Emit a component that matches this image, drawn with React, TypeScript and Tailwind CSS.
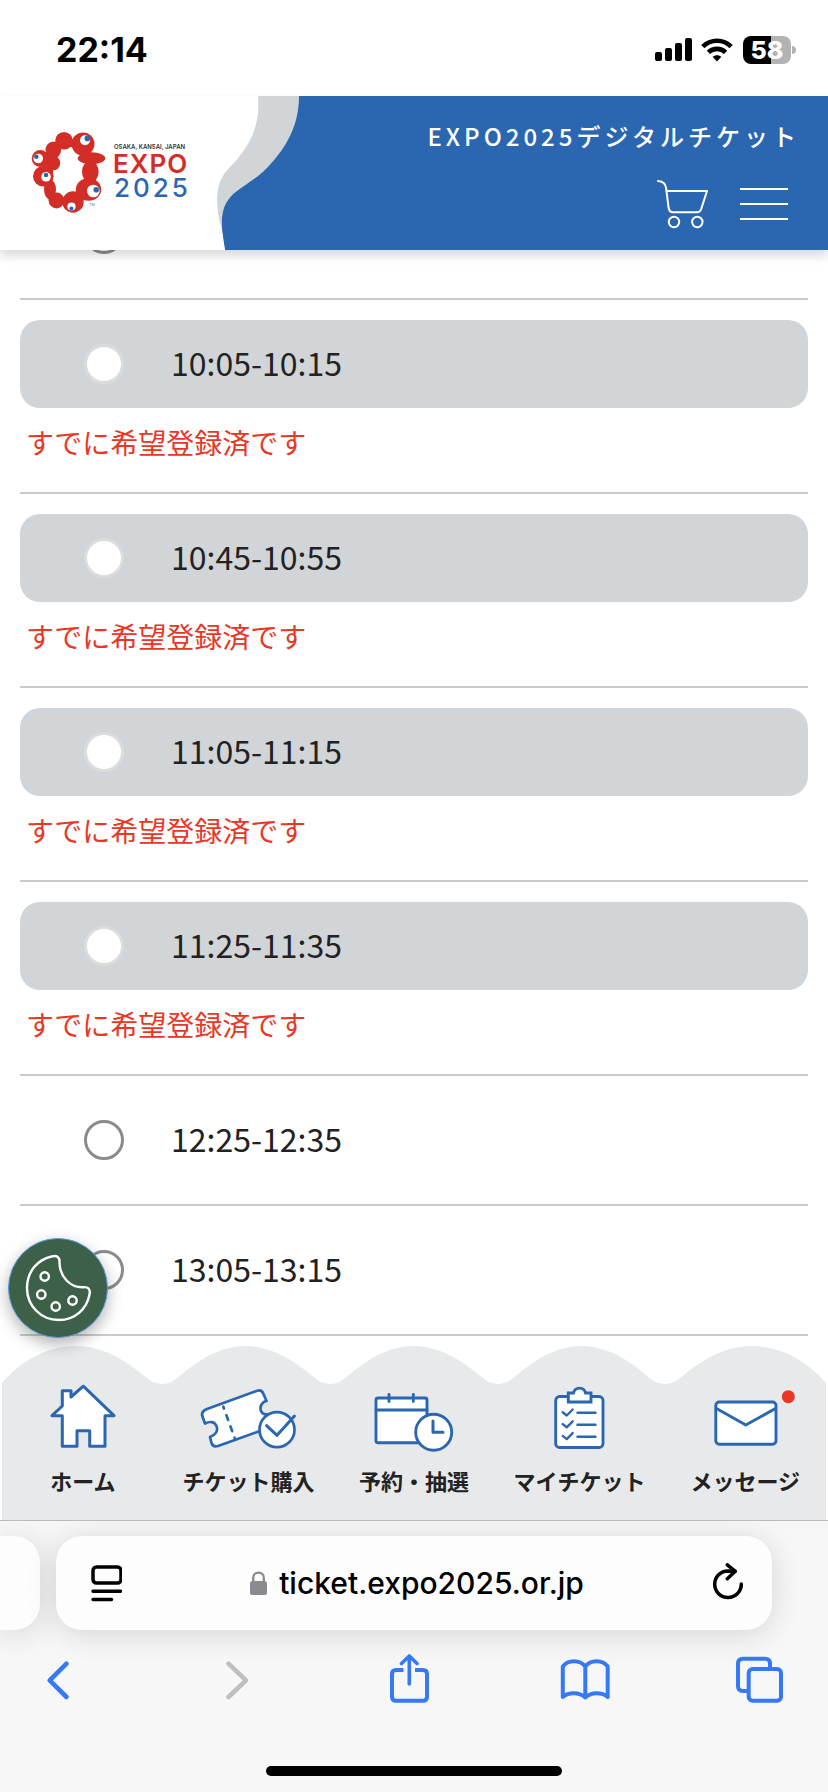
import React from 'react'

const slots = [
  { time: '10:05-10:15', taken: true },
  { time: '10:45-10:55', taken: true },
  { time: '11:05-11:15', taken: true },
  { time: '11:25-11:35', taken: true },
  { time: '12:25-12:35', taken: false },
  { time: '13:05-13:15', taken: false },
]

const iconStroke = {
  fill: '#fff',
  stroke: '#2b66b0',
  strokeWidth: 3,
  strokeLinejoin: 'round' as const,
  strokeLinecap: 'round' as const,
}

function StatusBar() {
  return (
    <div className="flex h-24 shrink-0 items-center justify-between pr-8 pl-14 pt-1 font-['Inter',sans-serif]">
      <span className="text-[34px] leading-10 font-bold text-black">22:14</span>
      <div className="flex items-center gap-2">
        <svg width="38" height="24" viewBox="0 0 38 24">
          <rect x="0" y="14" width="7" height="9" rx="2" />
          <rect x="10" y="10" width="7" height="13" rx="2" />
          <rect x="20" y="5" width="7" height="18" rx="2" />
          <rect x="30" y="0" width="7" height="23" rx="2" />
        </svg>
        <svg width="32" height="24" viewBox="0 0 32 24" fill="none" stroke="#000" strokeWidth="4.6">
          <path d="M1.8 8.6C9.6 0.8 22.4 0.8 30.2 8.6" />
          <path d="M7.4 14.4C12.2 9.7 19.8 9.7 24.6 14.4" />
          <path d="M16 23.5L11.6 18.8C14.1 16.6 17.9 16.6 20.4 18.8Z" fill="#000" stroke="none" />
        </svg>
        <div className="ml-0.5 flex items-center gap-px">
          <div className="flex h-7 w-12 items-center justify-center rounded-lg bg-linear-to-r from-black from-58% to-[#b3b3b3] to-58% text-[25px] leading-7 font-extrabold text-white">
            58
          </div>
          <div className="h-2 w-1 rounded-r-full bg-[#b3b3b3]" />
        </div>
      </div>
    </div>
  )
}

function Logo() {
  return (
    <a href="#top" aria-label="EXPO 2025" className="relative flex items-start gap-2 pt-[34px] pl-[30px]">
      <svg width="76" height="84" viewBox="0 0 76 84">
        <g fill="#d32d27">
          <circle cx="34" cy="10.7" r="8.8" />
          <circle cx="53" cy="14" r="11.5" />
          <ellipse cx="61.5" cy="28.3" rx="13.7" ry="6" />
          <ellipse cx="60.3" cy="41.7" rx="8.3" ry="11" />
          <ellipse cx="58.5" cy="59.5" rx="12.7" ry="11.3" />
          <circle cx="43" cy="72" r="10.7" />
          <circle cx="26.5" cy="70.5" r="7.9" />
          <ellipse cx="20" cy="59.5" rx="6" ry="10" />
          <circle cx="13.3" cy="46.3" r="10.3" />
          <circle cx="10.2" cy="28.5" r="8.5" />
          <circle cx="22.8" cy="33" r="7.5" />
          <ellipse cx="23.3" cy="20" rx="7.8" ry="8.6" />
          <rect x="13" y="24" width="10" height="20" />
          <rect x="40" y="9" width="6" height="8" />
          <path d="M46 20L56 22L54 34L50 25Z" />
        </g>
        <g fill="#fff">
          <circle cx="55" cy="10.3" r="5" />
          <circle cx="8.2" cy="28.5" r="4.8" />
          <circle cx="16" cy="46.8" r="4.8" />
          <circle cx="63.3" cy="61" r="6.3" />
          <circle cx="41.5" cy="76.5" r="4.1" />
        </g>
        <g fill="#2b66b0">
          <circle cx="57.3" cy="8.4" r="2.8" />
          <circle cx="6.3" cy="26.8" r="2.3" />
          <circle cx="16" cy="45" r="2.3" />
          <circle cx="66.2" cy="59.7" r="2.8" />
          <circle cx="41.4" cy="78.5" r="2" />
        </g>
        <text x="59" y="76" fontSize="4" fill="#777" fontFamily="Liberation Sans">TM</text>
      </svg>
      <svg width="80" height="84" viewBox="0 0 80 84" className="font-['Inter',sans-serif]">
        <text x="0" y="19" fontSize="6" fontWeight="600" fill="#333">OSAKA, KANSAI, JAPAN</text>
        <text x="-1" y="43" fontSize="26" fontWeight="600" letterSpacing="1" fill="#d32d27">EXPO</text>
        <text x="0" y="67" fontSize="26" fontWeight="500" letterSpacing="3" fill="#2b66b0">2025</text>
      </svg>
    </a>
  )
}

function Header() {
  return (
    <header className="relative z-10 flex h-[154px] shrink-0 justify-between bg-[#2b66b0] shadow-[0_6px_10px_rgba(0,0,0,0.15)]">
      <div className="relative flex w-[300px]">
        <svg className="absolute inset-0" width="300" height="154" viewBox="0 0 300 154">
          <path
            fill="#d1d5d8"
            d="M200 0H299C299 28 288 50 267 72C256 83 246 88 237 95C226 103 221 114 222 130C222 138 223 147 225 154H200Z"
          />
          <path fill="#fff" d="M0 0H258C260 24 254 46 232 69C218 82 216 95 217.5 112C218 120 220 127 222 134L225 154H0Z" />
        </svg>
        <Logo />
      </div>
      <div className="flex flex-col items-end gap-[22px] pt-[22px] pr-7">
        <p className="text-2xl leading-9 font-medium tracking-[4px] whitespace-nowrap text-white">EXPO2025デジタルチケット</p>
        <div className="flex items-center gap-8 pr-3">
          <button aria-label="カート">
            <svg width="56" height="56" viewBox="0 0 56 56" fill="none" stroke="#fff" strokeWidth="2" strokeLinecap="round" strokeLinejoin="round">
              <path d="M6 5C11 5.500 13.500 7.500 14 11.500L16.500 31C17 35 18.500 36.300 21 36.300H45C47.500 36.300 48.500 35 49.200 33L55 15H14.600" />
              <circle cx="22" cy="46" r="5.200" />
              <circle cx="45.300" cy="46" r="5.200" />
            </svg>
          </button>
          <button aria-label="メニュー" className="flex w-12 flex-col gap-[13px]">
            <span className="h-0.5 bg-white" />
            <span className="h-0.5 bg-white" />
            <span className="h-0.5 bg-white" />
          </button>
        </div>
      </div>
    </header>
  )
}

const radioClass = 'size-10 appearance-none rounded-full border-3 border-[#8b8b8c] bg-white disabled:border-[#dbdcdc]'

function SlotRow({ time, taken }: { time: string; taken: boolean }) {
  return (
    <li className="border-b-2 border-[#cbcbcb] py-5">
      <label className={taken ? 'flex h-[88px] items-center rounded-[20px] bg-[#d1d5d8] pl-16' : 'flex h-[88px] items-center pl-16'}>
        <input type="radio" name="slot" disabled={taken} className={radioClass} />
        <span className="pb-1 pl-[47px] text-[32px] leading-10 text-[#222]">{time}</span>
      </label>
      {taken && <p className="px-1.5 pt-3 pb-2 text-[28px] leading-11 text-[#e93625]">すでに希望登録済です</p>}
    </li>
  )
}

function CookieButton() {
  return (
    <button
      aria-label="Cookie"
      className="absolute -top-[108px] left-2 flex size-[100px] items-center justify-center rounded-full border border-[#5c9be0] bg-[#3c6148] shadow-[0_6px_16px_rgba(0,0,0,0.3)]"
    >
      <svg width="68" height="68" viewBox="0 0 68 68" fill="none" stroke="#fff" strokeWidth="2.400">
        <path d="M28.500 2.300C33 1.200 36 3.500 35.500 9C36 23 46 33.500 59 33.300C64 32.500 66.500 35 65.600 40C63 55 51 66 35 66C17 66 3 52 3 34C3 18 13 5.500 28.500 2.300Z" />
        <circle cx="20.700" cy="22.500" r="4.200" />
        <circle cx="17.300" cy="40.500" r="4.200" />
        <circle cx="31.700" cy="52.500" r="4.200" />
        <circle cx="48.500" cy="46.500" r="4.200" />
      </svg>
    </button>
  )
}

const menu = [
  {
    label: 'ホーム',
    icon: (
      <path d="M50.300 2.200L81 31.700H72V62.300H56.700V46.700H44V62.300H29.300V31.700H19L29.300 22V6.700H38V13Z" />
    ),
  },
  {
    label: 'チケット購入',
    icon: (
      <g strokeWidth="2.700">
        <path d="M9 25L58.500 7Q63.500 5 65.500 10L68.500 17C63.500 18 61.500 23 63 27C64.500 30.500 67 31 71 30L76 42L20 62Q15 63.500 13.500 59L12 53C17.500 51 20.500 47 18.500 42C16.500 37.500 12 37 7 39.500L4.300 32Q3 27.500 9 25Z" />
        <path d="M25.300 22.700L37 55" strokeDasharray="5 7" strokeDashoffset="3" />
        <circle cx="79" cy="45.700" r="17.500" />
        <path d="M68.600 41.700L79 51.300L96.500 32" fill="none" strokeWidth="3" />
      </g>
    ),
  },
  {
    label: '予約・抽選',
    icon: (
      <g strokeWidth="2.900">
        <rect x="12" y="14" width="51" height="44.700" rx="2" />
        <path d="M12 26H63M25 10.500V17.500M49.300 10.500V17.500" />
        <circle cx="69.700" cy="48.300" r="18" />
        <path d="M69 37V48.300H79" fill="none" strokeWidth="3" />
      </g>
    ),
  },
  {
    label: 'マイチケット',
    icon: (
      <g strokeWidth="2.900">
        <rect x="25.700" y="12.500" width="47.300" height="51" rx="4" />
        <path d="M38.300 9H43.500C45 2.500 54 2.500 55.500 9H61V18H38.300Z" strokeLinejoin="miter" />
        <path d="M32.700 28.300L36.700 31.500L42.700 25.500M32.700 40.100L36.700 43.300L42.700 37.300M32.700 51.900L36.700 55.100L42.700 49.100" fill="none" strokeWidth="2.400" />
        <path d="M47.500 28.700H65.500M47.500 40.700H65.500M47.500 52.700H65.500" strokeWidth="2.400" />
      </g>
    ),
  },
  {
    label: 'メッセージ',
    icon: (
      <g strokeWidth="2.900">
        <rect x="20.800" y="18" width="60.200" height="42.300" rx="3.500" />
        <path d="M21.500 24.500L50.800 41L80.500 24.500" fill="none" />
        <circle cx="93.300" cy="12.700" r="6.500" fill="#e93625" stroke="none" />
      </g>
    ),
  },
]

function BottomMenu() {
  return (
    <nav className="relative h-[174px] shrink-0">
      <svg className="absolute inset-0 h-full w-full" viewBox="0 0 828 174" preserveAspectRatio="none">
        <path
          fill="#e7e9eb"
          d="M2 37C20 16 45 0 77 0C103 0 127 15 148 33C156 39.500 168 39.500 176 33C197 15 219 0 246 0C272 0 295 15 316 33C324 39.500 336 39.500 344 33C365 15 387 0 414 0C440 0 463 15 484 33C492 39.500 504 39.500 512 33C533 15 555 0 582 0C608 0 630 15 651 33C659 39.500 671 39.500 679 33C700 15 724 0 751 0C783 0 808 16 826 37V174H2Z"
        />
      </svg>
      <ul className="relative grid grid-cols-5 pt-[38px]">
        {menu.map((item) => (
          <li key={item.label}>
            <a href="#menu" className="flex flex-col items-center gap-2.5">
              <svg width="100" height="70" viewBox="0 0 100 70" {...iconStroke}>
                {item.icon}
              </svg>
              <span className="text-[22px] leading-8 font-bold whitespace-nowrap text-[#222]">{item.label}</span>
            </a>
          </li>
        ))}
      </ul>
      <CookieButton />
    </nav>
  )
}

function BrowserBar() {
  return (
    <footer className="relative shrink-0 overflow-hidden border-t border-[#b9bbbd] bg-[#f7f7f7] pt-[15px] pb-4">
      <div className="flex gap-4 pr-14">
        <div className="h-[94px] w-10 rounded-r-[26px] bg-[#fdfdfd] shadow-[0_4px_32px_rgba(0,0,0,0.14)]" />
        <div className="flex h-[94px] flex-1 items-center justify-between rounded-[26px] bg-[#fdfdfd] pr-7 pl-[34px] shadow-[0_4px_32px_rgba(0,0,0,0.14)]">
          <button aria-label="ページ設定">
            <svg width="32" height="40" viewBox="0 0 32 40" fill="none" stroke="#000" strokeWidth="3.500" strokeLinecap="round">
              <rect x="3" y="4" width="28" height="16" rx="3.500" />
              <path d="M3 28.300H30.500M3 36.600H21.500" />
            </svg>
          </button>
          <button className="flex items-center gap-3 font-['Inter',sans-serif] text-[30px] leading-10 font-medium text-black">
            <svg width="17" height="24" viewBox="0 0 17 24">
              <rect x="0" y="10" width="17" height="14" rx="2.500" fill="#8a8a8f" />
              <path d="M3.200 11V6.800C3.200 0 13.800 0 13.800 6.800V11" fill="none" stroke="#8a8a8f" strokeWidth="2.300" />
            </svg>
            ticket.expo2025.or.jp
          </button>
          <button aria-label="再読み込み">
            <svg width="32" height="40" viewBox="0 0 32 40" fill="none" stroke="#000" strokeWidth="3.500" strokeLinecap="round" strokeLinejoin="round">
              <path d="M29.300 21A13.300 13.300 0 1 1 16 7.900L23 8.300" />
              <path d="M15.300 1.800L23.300 8.300L15.300 15.700" />
            </svg>
          </button>
        </div>
      </div>
      <div className="flex justify-between pt-6 pr-[43px] pl-[33px] text-[#3579f6]">
        <button aria-label="戻る">
          <svg width="50" height="50" viewBox="0 0 50 50" fill="none" stroke="currentColor" strokeWidth="4.600" strokeLinecap="round" strokeLinejoin="round">
            <path d="M33.500 9.700L16.700 26.300L33.500 43" />
          </svg>
        </button>
        <button aria-label="進む" disabled className="text-[#bfbfbf]">
          <svg width="50" height="50" viewBox="0 0 50 50" fill="none" stroke="currentColor" strokeWidth="4.600" strokeLinecap="round" strokeLinejoin="round">
            <path d="M19.500 9.700L37 26.300L19.500 43" />
          </svg>
        </button>
        <button aria-label="共有">
          <svg width="50" height="50" viewBox="0 0 50 50" fill="none" stroke="currentColor" strokeWidth="4" strokeLinejoin="round">
            <path d="M19.500 16H12Q8 16 8 20V42.700Q8 46.700 12 46.700H39Q43 46.700 43 42.700V20Q43 16 39 16H31" />
            <path d="M25.300 2.500V30M17.500 9.500L25.300 2L33 9.500" strokeLinecap="round" strokeWidth="3.600" />
          </svg>
        </button>
        <button aria-label="ブックマーク">
          <svg width="50" height="50" viewBox="0 0 50 50" fill="none" stroke="currentColor" strokeWidth="4" strokeLinejoin="round">
            <path d="M25.300 12.500C20 5.500 8 5.500 2.800 12.500V43C9 38 19 38 25.300 43.500C31.500 38 41.500 38 47.700 43V12.500C42.500 5.500 30.500 5.500 25.300 12.500V43" />
          </svg>
        </button>
        <button aria-label="タブ">
          <svg width="50" height="50" viewBox="0 0 50 50" fill="none" stroke="currentColor" strokeWidth="4">
            <path d="M13.700 37H8Q3 37 3 32V9.700Q3 4.700 8 4.700H30Q35 4.700 35 9.700V15" />
            <rect x="13.700" y="15" width="32.300" height="31.700" rx="4" />
          </svg>
        </button>
      </div>
      <div className="mx-auto mt-[62px] h-2.5 w-[296px] rounded-full bg-black" />
    </footer>
  )
}

function App() {
  return (
    <div className="flex h-screen flex-col bg-white font-['Noto_Sans_CJK_JP',sans-serif]">
      <StatusBar />
      <Header />
      <main className="min-h-0 flex-1 overflow-hidden px-5">
        {/* the list is scrolled, its first row is half under the header */}
        <ul className="-mt-9">
          <li className="flex border-b-2 border-[#cbcbcb] pb-11 pl-16">
            <input type="radio" name="slot" aria-label="9:45-9:55" className={radioClass} />
          </li>
          {slots.map((slot) => (
            <SlotRow key={slot.time} time={slot.time} taken={slot.taken} />
          ))}
        </ul>
      </main>
      <BottomMenu />
      <BrowserBar />
    </div>
  )
}

export default App
